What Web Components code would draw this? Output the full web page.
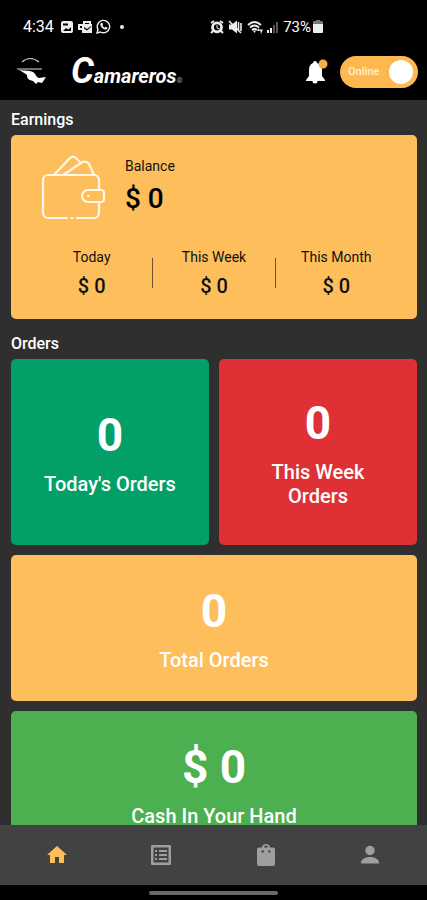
<!DOCTYPE html>
<html lang="en">
<head>
<meta charset="utf-8">
<meta name="viewport" content="width=device-width, initial-scale=1">
<title>Camareros</title>
<style>
  html, body { margin: 0; height: 100%; background: #000; }
  body { font-family: Roboto, "Liberation Sans", sans-serif; color: #fff; }
</style>
</head>
<body>
<camareros-app></camareros-app>

<script>
const define = (name, markup) => {
  const template = document.createElement('template');
  template.innerHTML = markup;
  customElements.define(name, class extends HTMLElement {
    connectedCallback() {
      if (this.shadowRoot) return;
      this.attachShadow({ mode: 'open' }).append(template.content.cloneNode(true));
    }
  });
};

define('status-bar', `
<style>
  :host { display: flex; justify-content: space-between; align-items: center; padding: 16px 104px 0 23px; font-size: 16px; line-height: 20px; }
  .group { display: flex; align-items: center; gap: 4px; }
  .battery { display: flex; align-items: center; gap: 2px; font-size: 15px; }
  svg { display: block; fill: #eee; }
</style>
<div class="group">
  <span>4:34</span>
  <svg width="16" height="14" viewBox="-2 0 16 14"><path fill-rule="evenodd" d="M3 1h8a2 2 0 0 1 2 2v8a2 2 0 0 1-2 2H3a2 2 0 0 1-2-2V3a2 2 0 0 1 2-2zM3 3.500v2h5v-2zM3 11h8V7L8.500 9.500 6 8z"/></svg>
  <svg width="14" height="14" viewBox="0 0 14 14"><path fill-rule="evenodd" d="M5 1h8v3h1v9H4v-3H0V4h5zM2 6v2h2V6zM7 3v1h4V3zM6 7l3 2 4-3v1L9 10.500 6 8.500z"/></svg>
  <svg width="15" height="15" viewBox="0 0 15 15"><path d="M1 14l1-3.500A6.200 6.200 0 1 1 4.500 13z" fill="none" stroke="#eee" stroke-width="1.400"/><path d="M5 4l1.200-.4.9 2-.7 1c.5 1 1.300 1.700 2.300 2.100l.9-.9 2 1c-.2 1.300-1.200 1.900-2.400 1.700C6.500 10 4.300 7.300 4.300 5.500c0-.6.300-1.100.7-1.500z"/></svg>
  <svg width="14" height="14" viewBox="0 0 14 14"><circle cx="7" cy="7" r="2"/></svg>
</div>
<div class="group">
  <svg width="14" height="14" viewBox="0 0 14 14"><path d="M1 3l3-2M13 3l-3-2M3 11l-2 2M11 11l2 2" stroke="#eee" stroke-width="2"/><circle cx="7" cy="7.300" r="4.500" fill="none" stroke="#eee" stroke-width="2.800"/><path d="M6.500 5h1v2.500l2 1-.5 1-2.500-1.500z"/></svg>
  <svg width="15" height="14" viewBox="0 0 15 14"><path d="M1 4.500h3l5-4v13l-5-4H1z"/><path d="M1 1l12 12M10.500 2v9M13 3v8" stroke="#eee" stroke-width="1.600" fill="none"/></svg>
  <svg width="16" height="14" viewBox="0 0 16 14"><path d="M1 5q6.500-6 13 0M3 7.500q4.500-4 9 0M5 10q2.500-2 5 0" fill="none" stroke="#eee" stroke-width="1.900"/><path d="M6 10.500h3L7.500 13zM10 11l2-3 1 3zM13 9.500h3L14 14z"/></svg>
  <svg width="12" height="14" viewBox="0 0 12 14"><path d="M0 10h2v3H0zM3 8h2v5H3z"/><path d="M6 5h2v8H6zM9 2h2v11H9z" fill="#555"/></svg>
  <span class="battery">73%
    <svg width="10" height="13" viewBox="0 0 10 13"><path d="M3 0h4v1h2a1 1 0 0 1 1 1v3H0V2a1 1 0 0 1 1-1h2z" fill="#777"/><path d="M0 4h10v8a1 1 0 0 1-1 1H1a1 1 0 0 1-1-1z"/></svg>
  </span>
</div>`);

define('online-switch', `
<style>
  :host { display: block; }
  label { display: flex; align-items: center; justify-content: space-between; box-sizing: border-box; width: 78px; height: 32px; padding: 0 5px 0 8px; border-radius: 16px; background: #ffb74f; color: #fff0d8; font-size: 11px; font-weight: 500; }
  input { appearance: none; width: 24px; height: 24px; margin: 0; border-radius: 50%; background: #fff; }
</style>
<label><slot></slot><input type="checkbox" role="switch" checked></label>`);

define('app-header', `
<style>
  :host { display: flex; align-items: center; padding: 6px 9px 0 16px; }
  .bird { margin-right: 24px; }
  .name { flex: 1; display: flex; align-items: baseline; padding-top: 8px; font-size: 20px; line-height: 40px; font-style: italic; font-weight: 700; }
  .big { font-size: 36px; }
  .mark { font-size: 8px; color: #999; }
  button { display: block; padding: 0; border: 0; background: none; margin-right: 12px; }
  svg { display: block; }
</style>
<svg class="bird" width="31" height="30" viewBox="0 0 31 30" role="img" aria-label="Camareros bird"><path d="M6 5q8-7 17 0" fill="none" stroke="#ccc" stroke-width="1.200"/><path d="M1 12h25" stroke="#bbb" stroke-width="1.200"/><path d="M3 13c6 1 10 0 14 2 3 2 3 5 6 6l7-1-4 6-4-1-2 2-3-3c-5-1-6-3-6-6-2-2-5-3-8-5z" fill="#fff"/></svg>
<div class="name"><span class="big">C</span>amareros<span class="mark">®</span></div>
<button aria-label="Notifications"><svg width="24" height="26" viewBox="0 0 24 26"><path d="M11 2a2 2 0 0 1 2 2c3 1 5 3.500 5 7v6l3 4v1H2v-1l3-4v-6c0-3.500 1.500-6 4-7a2 2 0 0 1 2-2zM8.500 22h5a2.500 2.500 0 0 1-5 0z" fill="#fff"/><circle cx="19" cy="5" r="4.500" fill="#f5b041"/></svg></button>
<online-switch>Online</online-switch>`);

define('section-title', `
<style>
  :host { display: block; }
  h2 { margin: 0; font-size: 16px; line-height: 20px; font-weight: 500; }
</style>
<h2><slot></slot></h2>`);

define('period-amount', `
<style>
  :host { flex: 1; display: flex; flex-direction: column; align-items: center; gap: 7px; font-size: 14px; line-height: 16px; }
  strong { font-size: 20px; line-height: 28px; font-weight: 500; }
</style>
<span><slot></slot></span><strong><slot name="amount"></slot></strong>`);

define('earnings-card', `
<style>
  :host { display: block; box-sizing: border-box; padding: 20px 20px 19px; border-radius: 5px; background: #ffbe5c; color: #111; }
  .top { display: flex; align-items: flex-start; gap: 19px; padding: 0 0 29px 10px; }
  .balance { display: flex; flex-direction: column; gap: 9px; padding-top: 3px; font-size: 14px; line-height: 16px; }
  .balance strong { font-size: 28px; line-height: 32px; font-weight: 500; color: #000; }
  .periods { display: flex; }
  .rule { width: 1px; height: 30px; margin-top: 9px; background: #6c5430; }
  svg { display: block; }
</style>
<div class="top">
  <svg width="65" height="65" viewBox="0 0 65 65" fill="none" stroke="#fff8e8" stroke-width="2.200" stroke-linecap="round" stroke-linejoin="round" aria-hidden="true">
    <path d="M26 63H7a5 5 0 0 1-5-5V25a5 5 0 0 1 5-5h46a5 5 0 0 1 5 5v10M58 47v11a5 5 0 0 1-5 5H36M30.500 63h1"/>
    <path d="M60 35H47a6 6 0 0 0 0 12h13a3 3 0 0 0 3-3v-6a3 3 0 0 0-3-3zM47 41h1"/>
    <path d="M13 20L29 3q3-3 6 0l4 4M22 20L40 8q5-3 8 1l5 11"/>
  </svg>
  <div class="balance"><span>Balance</span><strong>$ 0</strong></div>
</div>
<div class="periods">
  <period-amount>Today<span slot="amount">$ 0</span></period-amount>
  <div class="rule"></div>
  <period-amount>This Week<span slot="amount">$ 0</span></period-amount>
  <div class="rule"></div>
  <period-amount>This Month<span slot="amount">$ 0</span></period-amount>
</div>`);

define('stat-card', `
<style>
  :host { display: flex; flex-direction: column; align-items: center; justify-content: center; gap: 9px; box-sizing: border-box; min-height: 146px; padding: 0 24px 2px; border-radius: 5px; background: var(--card-color); text-align: center; }
  strong { font-size: 46px; line-height: 56px; font-weight: 700; }
  span { font-size: 20px; line-height: 24px; font-weight: 500; }
</style>
<strong><slot name="value"></slot></strong><span><slot></slot></span>`);

define('bottom-nav', `
<style>
  :host { display: block; background: #424242; }
  nav { display: flex; height: 60px; padding: 0 5px; }
  a { flex: 1; display: flex; align-items: center; justify-content: center; color: #9e9e9e; }
  a[aria-current] { color: #ffbe5c; }
  svg { display: block; fill: currentColor; }
</style>
<nav aria-label="Main">
  <a href="#home" aria-label="Home" aria-current="page"><svg width="24" height="24" viewBox="0 0 24 24"><path d="M10 20v-6h4v6h5v-8h3L12 3 2 12h3v8z"/></svg></a>
  <a href="#requests" aria-label="Order requests"><svg width="24" height="24" viewBox="0 0 24 24"><path fill-rule="evenodd" d="M3 2h18a1 1 0 0 1 1 1v18a1 1 0 0 1-1 1H3a1 1 0 0 1-1-1V3a1 1 0 0 1 1-1zM4.500 4.500v15h15v-15z"/><path d="M6 7h2v2H6zM10 7h8v2h-8zM6 11h2v2H6zM10 11h8v2h-8zM6 15h2v2H6zM10 15h8v2h-8z"/></svg></a>
  <a href="#orders" aria-label="Orders"><svg width="24" height="24" viewBox="0 0 24 24"><path fill-rule="evenodd" d="M8 4.500a4 3.500 0 0 1 8 0h3a2 2 0 0 1 2 2V21a2 2 0 0 1-2 2H5a2 2 0 0 1-2-2V6.500a2 2 0 0 1 2-2zM10 4.500h4a2 2 0 0 0-4 0zM7.500 8.500a1.200 1.200 0 1 0 2.400 0 1.200 1.200 0 1 0-2.400 0zM14.100 8.500a1.200 1.200 0 1 0 2.400 0 1.200 1.200 0 1 0-2.400 0z"/></svg></a>
  <a href="#profile" aria-label="Profile"><svg width="24" height="24" viewBox="0 0 24 24"><circle cx="12" cy="7.500" r="4.700"/><path d="M3 20.500v-1c0-3.500 5-5.500 9-5.500s9 2 9 5.500v1z"/></svg></a>
</nav>`);

define('gesture-bar', `
<style>
  :host { display: flex; justify-content: center; align-items: center; height: 15px; background: #000; }
  div { width: 30%; height: 4px; border-radius: 2px; background: #6a6a6a; }
</style>
<div></div>`);

define('camareros-app', `
<style>
  :host { display: flex; flex-direction: column; height: 100vh; }
  status-bar, app-header, bottom-nav, gesture-bar { flex: none; box-sizing: border-box; }
  status-bar { height: 37px; }
  app-header { height: 63px; }
  main { flex: 1; min-height: 0; overflow-y: auto; scrollbar-width: none; box-sizing: border-box; padding: 10px 10px 10px 11px; background: #2f2f2f; }
  .earnings { display: grid; gap: 5px; margin-bottom: 15px; }
  .orders { display: grid; grid-template-columns: 1fr 1fr; gap: 10px; padding-top: 5px; }
  .orders > * { --card-color: #ffbe5c; }
  .orders .today { --card-color: #029f67; min-height: 186px; }
  .orders .week { --card-color: #df3035; min-height: 186px; }
  .orders .wide { grid-column: 1 / -1; }
  .orders .cash { --card-color: #4caf50; }
</style>
<status-bar></status-bar>
<app-header></app-header>
<main>
  <section class="earnings"><section-title>Earnings</section-title><earnings-card></earnings-card></section>
  <section>
    <section-title>Orders</section-title>
    <div class="orders">
      <stat-card class="today"><span slot="value">0</span>Today's Orders</stat-card>
      <stat-card class="week"><span slot="value">0</span>This Week Orders</stat-card>
      <stat-card class="wide"><span slot="value">0</span>Total Orders</stat-card>
      <stat-card class="wide cash"><span slot="value">$ 0</span>Cash In Your Hand</stat-card>
    </div>
  </section>
</main>
<bottom-nav></bottom-nav>
<gesture-bar></gesture-bar>`);
</script>
</body>
</html>
